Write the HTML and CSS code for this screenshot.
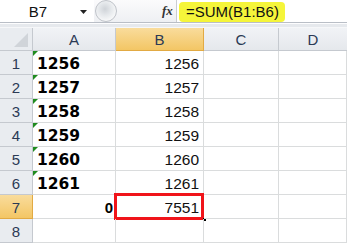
FILE: index.html
```html
<!DOCTYPE html>
<html>
<head>
<meta charset="utf-8">
<link rel="stylesheet" href="styles.css">
</head>
<body>
<div class="app">
  <div class="fbar">
    <div class="namebox">
      <span class="name">B7</span>
      <svg class="drop" width="7" height="4" viewBox="0 0 7 4"><path d="M0 0H7L3.5 4Z" fill="#222"/></svg>
    </div>
    <div class="mid">
      <div class="knob"></div>
      <span class="fx">fx</span>
    </div>
    <div class="input">
      <span class="formula">=SUM(B1:B6)</span>
    </div>
  </div>
  <div class="strip"></div>
  <div class="sheet">
    <div class="corner"><div class="tri"></div></div>
    <div class="ch">A</div>
    <div class="ch sel">B</div>
    <div class="ch">C</div>
    <div class="ch last">D</div>

    <div class="rh">1</div><div class="c a"><i class="flag"></i>1256</div><div class="c b">1256</div><div class="c"></div><div class="c"></div>
    <div class="rh">2</div><div class="c a"><i class="flag"></i>1257</div><div class="c b">1257</div><div class="c"></div><div class="c"></div>
    <div class="rh">3</div><div class="c a"><i class="flag"></i>1258</div><div class="c b">1258</div><div class="c"></div><div class="c"></div>
    <div class="rh">4</div><div class="c a"><i class="flag"></i>1259</div><div class="c b">1259</div><div class="c"></div><div class="c"></div>
    <div class="rh">5</div><div class="c a"><i class="flag"></i>1260</div><div class="c b">1260</div><div class="c"></div><div class="c"></div>
    <div class="rh">6</div><div class="c a"><i class="flag"></i>1261</div><div class="c b">1261</div><div class="c"></div><div class="c"></div>
    <div class="rh sel">7</div><div class="c zero">0</div><div class="c b active">7551<span class="box"></span><span class="handle"></span></div><div class="c"></div><div class="c"></div>
    <div class="rh">8</div><div class="c"></div><div class="c"></div><div class="c"></div><div class="c"></div>
  </div>
</div>
</body>
</html>
```

FILE: styles.css
```css
html, body { margin: 0; padding: 0; background: #fff; }
body { width: 347px; height: 243px; overflow: hidden; font-family: "Liberation Sans", Arial, sans-serif; }
.app { width: 347px; }

.fbar { display: flex; height: 23px; background: #fff; border-bottom: 1px solid #b9bec6; box-sizing: border-box; }
.namebox { width: 94px; display: flex; align-items: center; position: relative; }
.name { width: 76px; text-align: center; font-size: 15px; color: #111; }
.drop { margin-left: 4px; margin-top: 1px; }
.mid { width: 82px; display: flex; align-items: center; background: linear-gradient(#fbfbfc, #eef0f3); }
.knob { width: 22px; height: 22px; border-radius: 50%; border: 1px solid #bfc3c9; box-sizing: border-box; background: radial-gradient(circle at 45% 40%, #cfd3d8 0, #e6e9ec 40%, #f6f7f8 70%); margin-left: 1px; }
.fx { margin-left: 45px; font-family: "Liberation Serif", serif; font-style: italic; font-weight: bold; font-size: 13px; color: #333; }
.input { flex: 1; border-left: 1px solid #c9ccd1; display: flex; align-items: center; padding-left: 2px; }
.formula { background: #f5f53a; border-radius: 4px; height: 20px; line-height: 20px; padding: 0 6px 0 7px; font-size: 15px; color: #111; margin-top: 1px; }

.strip { height: 5px; background: #e6e9ed; border-bottom: 1px solid #f6f7f9; border-top: 1px solid #fdfdfe; box-sizing: border-box; }

.sheet { display: grid; grid-template-columns: 33px 83px 88px 75px 1fr; grid-template-rows: 23px repeat(8, 24px); }
.corner { background: #e9ecf0; border-right: 1px solid #c5c9cf; border-bottom: 1px solid #c5c9cf; position: relative; }
.tri { position: absolute; right: 4px; bottom: 3px; width: 0; height: 0; border-left: 14px solid transparent; border-bottom: 14px solid #d0d4d9; }
.ch { background: linear-gradient(#f1f3f6, #e5e8ec); border-right: 1px solid #c5c9cf; border-bottom: 1px solid #c5c9cf; display: flex; align-items: center; justify-content: center; font-size: 15px; color: #2b3a55; padding-top: 1px; }
.ch.sel { background: linear-gradient(#f9dc9c, #f3c665); border-color: #e2aa43; }
.ch.last { border-right: none; }
.rh { background: #e9ecf0; border-right: 1px solid #c5c9cf; border-bottom: 1px solid #c5c9cf; display: flex; align-items: center; justify-content: center; font-size: 15px; color: #2b3a55; padding-top: 1px; }
.rh.sel { background: linear-gradient(#f9dc9c, #f3c665); border-color: #e2aa43; }

.c { border-right: 1px solid #dadcdd; border-bottom: 1px solid #dadcdd; position: relative; display: flex; align-items: center; font-size: 15px; color: #111; }
.a { font-family: "DejaVu Sans", sans-serif; font-weight: bold; font-size: 15.5px; padding-left: 4px; padding-top: 2px; color: #000; }
.flag { position: absolute; left: 0; top: 0; width: 0; height: 0; border-top: 5px solid #1f8b1f; border-right: 5px solid transparent; }
.b { justify-content: flex-end; padding-right: 4px; padding-top: 2px; font-size: 15.5px; }
.zero { justify-content: flex-end; padding-right: 2px; font-weight: bold; font-size: 15px; padding-top: 2px; color: #000; }
.active { overflow: visible; }
.box { position: absolute; left: -2px; top: -2px; right: -1px; bottom: -2px; border: 3px solid #f0141a; }
.handle { position: absolute; right: -3px; bottom: -3px; width: 3px; height: 3px; background: #000; }
```
